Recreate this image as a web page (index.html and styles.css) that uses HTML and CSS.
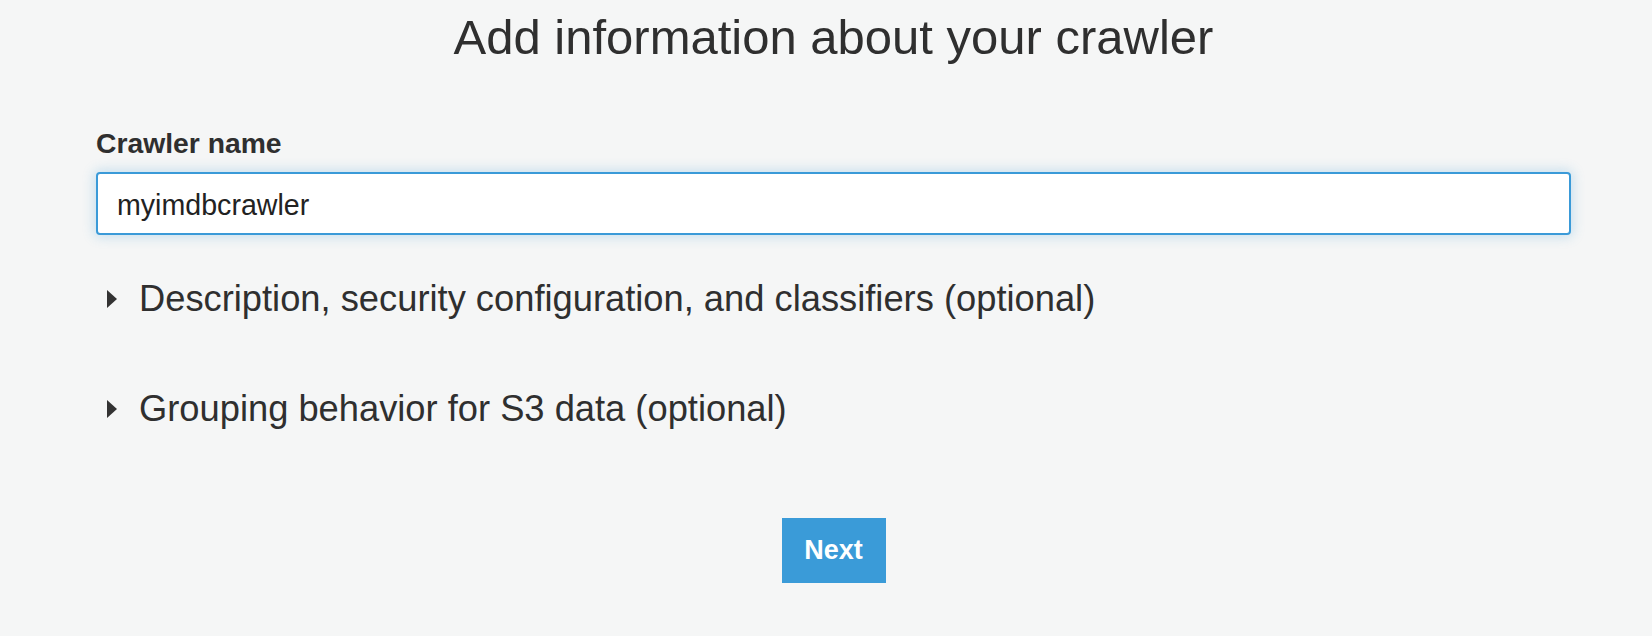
FILE: index.html
```html
<!DOCTYPE html>
<html lang="en">
<head>
<meta charset="utf-8">
<title>Add information about your crawler</title>
<link rel="stylesheet" href="styles.css">
</head>
<body>
<main class="page">
  <h1 class="title">Add information about your crawler</h1>
  <div class="field">
    <label class="label" for="crawler-name">Crawler name</label>
    <input class="input" id="crawler-name" type="text" value="myimdbcrawler">
  </div>
  <div class="expanders">
    <div class="expander">
      <svg class="caret" width="10" height="18" viewBox="0 0 10 18"><polygon points="0,0 10,9 0,18" fill="#333"/></svg>
      <span class="expander-text">Description, security configuration, and classifiers (optional)</span>
    </div>
    <div class="expander">
      <svg class="caret" width="10" height="18" viewBox="0 0 10 18"><polygon points="0,0 10,9 0,18" fill="#333"/></svg>
      <span class="expander-text">Grouping behavior for S3 data (optional)</span>
    </div>
  </div>
  <div class="actions">
    <button class="btn-primary" type="button">Next</button>
  </div>
</main>
</body>
</html>
```

FILE: styles.css
```css
html, body {
  margin: 0;
  padding: 0;
  background: #f5f6f6;
}
body {
  font-family: "Liberation Sans", Arial, Helvetica, sans-serif;
  color: #333;
}
.page {
  margin-left: 96px;
  width: 1475px;
  padding-top: 9px;
  display: flex;
  flex-direction: column;
}
.title {
  margin: 0;
  font-size: 49px;
  font-weight: 400;
  line-height: 56px;
  text-align: center;
  color: #2f2f2f;
}
.field {
  margin-top: 62px;
  display: flex;
  flex-direction: column;
  gap: 13px;
}
.label {
  font-size: 28.3px;
  font-weight: 700;
  line-height: 32px;
  color: #2f2f2f;
}
.input {
  box-sizing: border-box;
  width: 100%;
  height: 63px;
  margin: 0;
  padding: 3px 18px 0 19px;
  border: 2px solid #3a9ad8;
  border-radius: 4px;
  background: #fff;
  font-family: "Liberation Sans", Arial, Helvetica, sans-serif;
  font-size: 28.6px;
  color: #222;
  box-shadow: 0 0 12px 2px rgba(58, 154, 216, 0.25);
  outline: none;
}
.expanders {
  margin-top: 43px;
  display: flex;
  flex-direction: column;
  gap: 68px;
}
.expander {
  display: flex;
  align-items: center;
  height: 42px;
  padding-left: 11px;
}
.caret {
  flex: none;
  margin-right: 22px;
}
.expander-text {
  font-size: 36.3px;
  line-height: 42px;
  color: #2f2f2f;
}
.actions {
  margin-top: 88px;
  display: flex;
  justify-content: center;
}
.btn-primary {
  width: 104px;
  height: 65px;
  border: none;
  border-radius: 0;
  background: #3a9bd8;
  color: #fff;
  font-family: "Liberation Sans", Arial, Helvetica, sans-serif;
  font-size: 27px;
  font-weight: 700;
  padding: 0;
  cursor: pointer;
}
```
